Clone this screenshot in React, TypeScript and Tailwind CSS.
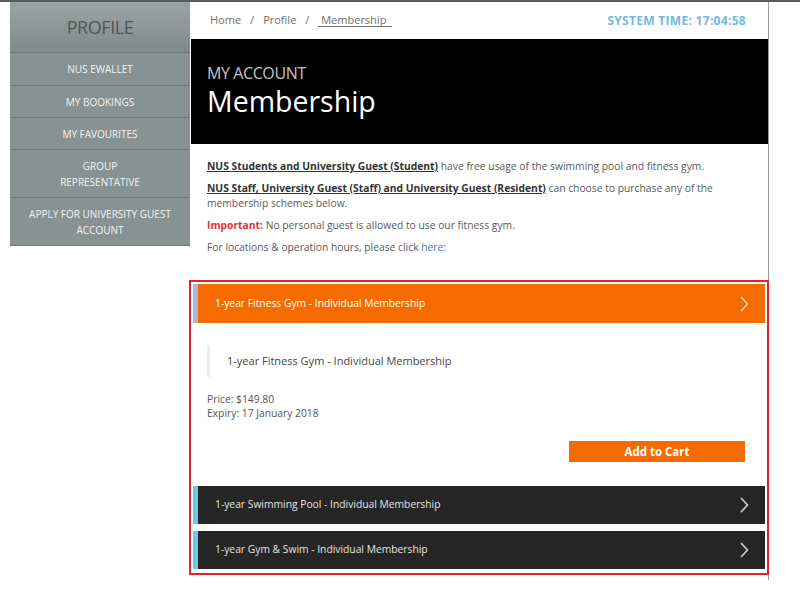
import React from "react"

const menu = [
  { label: "NUS EWALLET", h: "h-[33px]" },
  { label: "MY BOOKINGS", h: "h-[32px]" },
  { label: "MY FAVOURITES", h: "h-[32px]" },
  { label: "GROUP\nREPRESENTATIVE", h: "h-[48px]" },
  { label: "APPLY FOR UNIVERSITY GUEST\nACCOUNT", h: "h-[48px]" },
]

function Chevron({ color }: { color: string }) {
  return (
    <svg width="9" height="16" viewBox="0 0 9 16" fill="none">
      <polyline points="1.5,1.5 7.5,8 1.5,14.5" stroke={color} strokeWidth="1.8" strokeLinecap="round" strokeLinejoin="round" />
    </svg>
  )
}

function DarkRow({ title }: { title: string }) {
  return (
    <div className="flex h-[38px] items-center justify-between border-l-[5px] border-[#6ccbe2] bg-[#262626] pl-[17px] pr-[16px]">
      <span className="text-[10.3px] text-[#e4e4e4]">{title}</span>
      <Chevron color="#c8c8c8" />
    </div>
  )
}

export default function App() {
  return (
    <div
      className="flex h-[613px] w-[800px] border-t-2 border-[#5a5a5a] bg-white"
      style={{ fontFamily: '"Open Sans", "Noto Sans", sans-serif' }}
    >
      {/* Sidebar */}
      <aside className="ml-[10px] w-[180px] self-start">
        <div className="flex h-[51px] items-center justify-center border-b border-[#6e787a] bg-gradient-to-b from-[#9ba4a5] to-[#7f8a8c]">
          <span className="text-[18px] tracking-tight text-[#4c5658]">PROFILE</span>
        </div>
        {menu.map((m) => (
          <div
            key={m.label}
            className={`flex ${m.h} items-center justify-center whitespace-pre-line border-b border-[#6f797b] bg-[#879293] text-center text-[10px] leading-[16px] text-[#f2f2f2]`}
          >
            {m.label}
          </div>
        ))}
      </aside>

      {/* Main */}
      <main className="flex h-[578px] w-[579px] flex-col border-r border-[#9a9a9a]">
        <div className="flex h-[37px] items-center justify-between pl-[20px] pr-[22px]">
          <div className="flex items-center gap-[9px] text-[11px] text-[#707070]">
            <span>Home</span>
            <span>/</span>
            <span>Profile</span>
            <span>/</span>
            <span className="underline underline-offset-2">&nbsp;Membership&nbsp;&nbsp;</span>
          </div>
          <span className="text-[12px] font-bold tracking-wide text-[#72b6ea]">SYSTEM TIME: 17:04:58</span>
        </div>

        <div className="ml-px flex h-[105px] flex-col justify-center bg-black pl-[16px] pb-[4px]">
          <span className="text-[16px] leading-[22px] tracking-tight text-[#c4c4c4]">MY ACCOUNT</span>
          <span className="text-[28.5px] leading-[34px] text-white">Membership</span>
        </div>

        <div className="flex flex-col gap-[7px] px-[17px] pt-[15px] text-[10.3px] leading-[15px] text-[#5a5a5a]">
          <p>
            <span className="font-bold text-[#333] underline">NUS Students and University Guest (Student)</span> have free
            usage of the swimming pool and fitness gym.
          </p>
          <p>
            <span className="font-bold text-[#333] underline">
              NUS Staff, University Guest (Staff) and University Guest (Resident)
            </span>{" "}
            can choose to purchase any of the membership schemes below.
          </p>
          <p>
            <span className="font-bold text-[#e8303a]">Important:</span> No personal guest is allowed to use our fitness gym.
          </p>
          <p>
            For locations &amp; operation hours, please click <span className="text-[#4a7bc4]">here:</span>
          </p>
        </div>

        <div className="mt-[25px] -ml-px w-[580px] border-2 border-[#e3212f] p-[2px]">
          <div className="flex h-[39px] items-center justify-between border-l-[5px] border-[#a4b9dc] bg-[#f56b00] pl-[17px] pr-[16px]">
            <span className="text-[10.3px] text-white">1-year Fitness Gym - Individual Membership</span>
            <Chevron color="#fcd2a8" />
          </div>

          <div className="flex flex-col px-[14px] pt-[22px] pb-[24px]">
            <div className="flex h-[32px] items-center border-l-[3px] border-[#ececec] pl-[17px] text-[11px] text-[#454545]">
              1-year Fitness Gym - Individual Membership
            </div>
            <div className="mt-[15px] text-[10.3px] leading-[14px] text-[#555]">
              <p>Price: $149.80</p>
              <p>Expiry: 17 January 2018</p>
            </div>
            <div className="mt-[21px] flex justify-end pr-[6px]">
              <button className="h-[21px] w-[176px] bg-[#f56b00] text-[11.5px] font-bold text-white">Add to Cart</button>
            </div>
          </div>

          <div className="flex flex-col gap-[7px] pb-[2px]">
            <DarkRow title="1-year Swimming Pool - Individual Membership" />
            <DarkRow title="1-year Gym & Swim - Individual Membership" />
          </div>
        </div>
      </main>
    </div>
  )
}
